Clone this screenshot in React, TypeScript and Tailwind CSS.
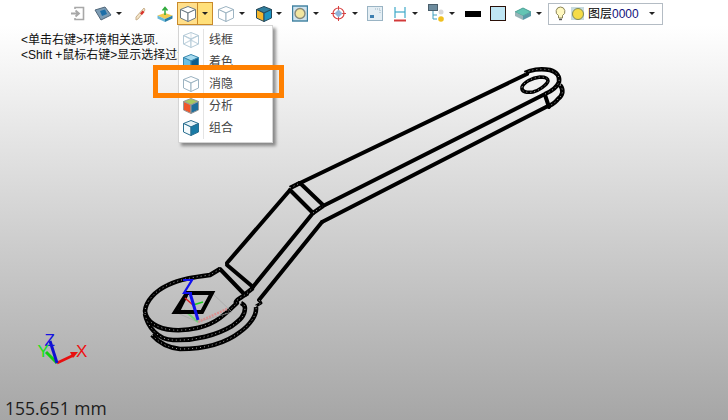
import React from 'react';

const Caret: React.FC<{ className?: string }> = ({ className = '' }) => (
    <span className={`h-0 w-0 shrink-0 border-x-[3px] border-t-[3px] border-x-transparent border-t-[#222] ${className}`} />
);

const Cube: React.FC<{ top?: string; left?: string; right?: string; stroke?: string; wire?: boolean }> = ({
    top = '#ffffff',
    left = '#ffffff',
    right = '#ffffff',
    stroke = '#7f98a8',
    wire = false
}) => (
    <svg width="18" height="18" viewBox="0 0 18 18" className="shrink-0">
        <path d="M9 1.5 16.5 4.5 9 8 1.5 4.5Z" fill={top} stroke={stroke} />
        <path d="M1.5 4.5 9 8V16.5L1.5 13Z" fill={left} stroke={stroke} />
        <path d="M16.5 4.5 9 8V16.5L16.5 13Z" fill={right} stroke={stroke} />
        {wire && <path d="M1.5 13 9 9.5 16.5 13M9 1.5V9.5M1.5 4.5 16.5 13M16.5 4.5 1.5 13" fill="none" stroke={stroke} strokeWidth="0.6" />}
    </svg>
);

const menuItems = [
    { label: '线框', icon: <Cube wire stroke="#b5cbd8" /> },
    { label: '着色', icon: <Cube top="#a8dcf0" left="#6cc0e4" right="#0d5d8c" stroke="#3a8ab0" /> },
    { label: '消隐', icon: <Cube stroke="#9db4c2" /> },
    { label: '分析', icon: <Cube top="#a8c860" left="#f0562a" right="#1f6f9c" stroke="#999" /> },
    { label: '组合', icon: <Cube top="#e8f4f8" left="#f4fafc" right="#1a7ba6" stroke="#2a6f90" /> }
];

// speckled edge that the tessellated parts of the model show
const Rough: React.FC<{ d: string; w?: number }> = ({ d, w = 4.5 }) => (
    <>
        <path d={d} fill="none" stroke="#000" strokeWidth={w} strokeLinejoin="round" />
        <path d={d} fill="none" stroke="#a0a0a0" strokeWidth={1} strokeDasharray="1 3" />
    </>
);

const Wrench = () => (
    <svg className="absolute left-0 top-0" width="728" height="420" viewBox="0 0 728 420">
        <g fill="none" stroke="#000" strokeWidth="4" strokeLinecap="round" strokeLinejoin="round">
            <path d="M298 184 527 74" />
            <path d="M323 206 545 94" />
            <path d="M322 222 548 106" />
            <path d="M300 183 323 205" />
            <path d="M290 190 313 213" />
            <path d="M290 190 227 263" />
            <path d="M313 213 252 288" />
            <path d="M322 222 259 300" />
            <path d="M227 265 253 287" />
            <path d="M220 269 245 295" />
            <path d="M545 95 549 107" />
        </g>
        <Rough d="M525 73C530 70 540 68 550 70C557 72 560 77 559 82C557 87 552 91 545 94" />
        <Rough d="M560 85C564 90 563 95 558 99C556 102 553 104 549 106" />
        <Rough d="M522 87C524 82 532 78 540 77C545 77 548 78 548 81C547 85 538 91 533 92C527 93 521 92 522 87Z" w={3.5} />
        <Rough d="M290 188 300 183" />
        <Rough d="M313 213 323 206" />
        <Rough d="M244 295 253 288" />
        <Rough d="M220 269 210 275C195 277 180 279 168 285C155 291 146 301 145 311C146 322 158 329 173 330C190 331 208 327 220 318C228 312 233 307 237 303C233 302 240 298 248 293" />
        <Rough d="M145 314C147 326 158 340 173 340C195 341 217 335 232 326C240 320 245 316 245 308C245 305 243 304 241 303" />
        <Rough d="M152 335C160 344 170 348 180 349C205 349 226 343 240 332C250 325 257 315 256 307" />
        <Rough d="M256 306 261 303 259 300" w={3} />
        {/* section plane and triad on the head */}
        <path d="M212 293 232 312 198 322 175 312" fill="none" stroke="#a4a4a4" strokeWidth="0.7" />
        <path d="M198 322 227 309" stroke="#d99090" strokeWidth="2.5" strokeDasharray="2 1" fill="none" />
        <path d="M198 322 184 310" stroke="#78d078" strokeWidth="2" fill="none" />
        <path d="M187 293H212L202 312H175Z" fill="none" stroke="#000" strokeWidth="4" />
        <path d="M187 295 179 311" fill="none" stroke="#000" strokeWidth="2.5" />
        <path d="M185 298 193 305" stroke="#e02020" strokeWidth="1.5" fill="none" />
        <path d="M193 305 203 302" stroke="#18d018" strokeWidth="1.5" fill="none" />
        <path d="M183 280H192L184 293H192" stroke="#1010ee" strokeWidth="2.2" fill="none" />
        <path d="M190 293 198 320" stroke="#1010ee" strokeWidth="3" fill="none" />
        {/* axis triad bottom left */}
        <path d="M57 363 74 355" stroke="#e81010" strokeWidth="2.5" fill="none" />
        <path d="M70 352 78 352 73 358Z" fill="#e81010" />
        <path d="M57 363 46 352" stroke="#10d010" strokeWidth="3" fill="none" />
        <path d="M57 363 50 341" stroke="#1010d0" strokeWidth="3" fill="none" />
        <text x="44.5" y="346" fill="#1414e0" fontSize="17" fontFamily="'Liberation Sans', sans-serif">Z</text>
        <text x="37.5" y="357" fill="#18e018" fontSize="17" fontFamily="'Liberation Sans', sans-serif">Y</text>
        <text x="76" y="357" fill="#ee1010" fontSize="17" fontFamily="'Liberation Sans', sans-serif">X</text>
    </svg>
);

const App: React.FC = () => {
    return (
        <div
            className="relative h-[420px] w-[728px] overflow-hidden bg-gradient-to-b from-white from-[6%] to-[#a6a6a6]"
            style={{ fontFamily: "'Liberation Sans', 'Noto Sans CJK SC', sans-serif" }}
        >
            <Wrench />

            {/* toolbar */}
            <div className="relative flex h-[27px] items-center pl-[70px]">
                <svg width="15" height="15" viewBox="0 0 15 15" className="mr-[9px] shrink-0">
                    <path d="M5 3V1.5H13.5V13.5H5V12" fill="none" stroke="#a8a8a8" strokeWidth="1.6" />
                    <path d="M1 7.5H9M5.5 4.5 9 7.5 5.5 10.5" fill="none" stroke="#a8a8a8" strokeWidth="1.8" />
                </svg>
                <svg width="18" height="15" viewBox="0 0 18 15" className="mr-[2px] shrink-0">
                    <path d="M1 4 11 1 17 9 7 14Z" fill="#7c9cb4" stroke="#51677a" />
                    <path d="M6 5 11 3.5 13 8 8 10Z" fill="#1d6fa8" />
                </svg>
                <Caret className="ml-[2px] mr-[13px]" />
                <svg width="11" height="14" viewBox="0 0 11 14" className="mr-[11px] shrink-0">
                    <path d="M9 1 10 3 3 12 1 13 1 10Z" fill="#f3e4c8" stroke="#c9b08c" />
                    <path d="M7.5 3.5 9.5 5 7 8 5 6.5Z" fill="#d8342c" />
                </svg>
                <svg width="16" height="16" viewBox="0 0 16 16" className="mr-[4px] shrink-0">
                    <path d="M8 7 15.5 9.5 8 13 .5 9.5Z" fill="#f2cb4e" />
                    <path d="M.5 9.5 8 13V16L.5 12.5Z" fill="#6ab8d8" />
                    <path d="M15.5 9.5 8 13V16L15.5 12.5Z" fill="#2a7fa8" />
                    <path d="M8 9V2M5.5 4.5 8 1.5 10.5 4.5" fill="none" stroke="#2faa3c" strokeWidth="1.5" />
                </svg>

                {/* active split button */}
                <div className="flex h-[23px] w-[36px] shrink-0 border border-[#c98a2a] bg-[#ffe07a]">
                    <div className="flex w-[20px] items-center justify-center border-r border-[#c98a2a] bg-[#ffdf8a]">
                        <Cube stroke="#6d7c86" />
                    </div>
                    <div className="flex flex-1 items-center justify-center">
                        <Caret />
                    </div>
                </div>

                <div className="mx-[4px]">
                    <Cube stroke="#9db4c2" />
                </div>
                <Caret className="mr-[10px]" />
                <Cube top="#2f7f9f" left="#f4b62c" right="#1b93c2" stroke="#24495c" />
                <Caret className="ml-[3px] mr-[10px]" />
                <svg width="16" height="18" viewBox="0 0 16 18" className="mr-[5px] shrink-0">
                    <rect x="0.5" y="1" width="15" height="15" fill="#cfe4ef" stroke="#3d7f9f" strokeWidth="1.4" />
                    <circle cx="8" cy="8.5" r="5" fill="#f2e6a0" stroke="#8a8a7a" strokeWidth="1.4" />
                </svg>
                <Caret className="mr-[12px]" />
                <svg width="15" height="15" viewBox="0 0 15 15" className="mr-[3px] shrink-0">
                    <circle cx="7.5" cy="7.5" r="5.5" fill="none" stroke="#d84040" strokeWidth="1.2" />
                    <path d="M7.5 0V15M0 7.5H15" stroke="#d84040" strokeWidth="1" />
                    <path d="M7.5 3.5 11.5 7.5 7.5 11.5 3.5 7.5Z" fill="#8fb4d8" />
                </svg>
                <Caret className="ml-[3px] mr-[9px]" />
                <svg width="16" height="15" viewBox="0 0 16 15" className="mr-[11px] shrink-0">
                    <rect x="0.5" y="0.5" width="15" height="14" fill="#e4eef4" stroke="#9ab4c4" />
                    <rect x="3" y="9" width="4" height="3" fill="#3d7fb0" />
                    <path d="M8 3H13V8" fill="none" stroke="#9ab4c4" strokeDasharray="1 1" />
                </svg>
                <svg width="12" height="16" viewBox="0 0 12 16" className="mr-[6px] shrink-0">
                    <path d="M1 1V12M11 1V12" stroke="#3fa9c9" strokeWidth="1.2" />
                    <path d="M1 6H11" stroke="#3fa9c9" strokeWidth="1.2" />
                    <path d="M0 14.5H12" stroke="#d23a3a" strokeWidth="2" />
                </svg>
                <Caret className="mr-[10px]" />
                <svg width="17" height="20" viewBox="0 0 17 20" className="mr-[4px] shrink-0">
                    <rect x="0.5" y="0.5" width="9" height="6" fill="#6d8c9e" stroke="#4a5f6c" />
                    <path d="M5 7V15H9M5 11H9" fill="none" stroke="#3f9fbe" />
                    <circle cx="13" cy="8" r="2.5" fill="#d8d8d8" />
                    <circle cx="13" cy="15" r="2.8" fill="#f0c020" />
                </svg>
                <Caret className="mr-[10px]" />
                <span className="mr-[9px] h-[6px] w-[16px] shrink-0 bg-black" />
                <span className="mr-[8px] h-[15px] w-[16px] shrink-0 border border-[#2a1008] bg-[#bfe6f4]" />
                <svg width="18" height="14" viewBox="0 0 18 14" className="mr-[2px] shrink-0">
                    <path d="M9 1 17 5 9 9 1 5Z" fill="#63c4b4" stroke="#4aa094" />
                    <path d="M1 5 9 9V13L1 9Z" fill="#9ab4b8" />
                    <path d="M17 5 9 9V13L17 9Z" fill="#5a9aa8" />
                </svg>
                <Caret className="ml-[2px] mr-[6px]" />

                {/* layer combo */}
                <div className="flex h-[22px] w-[115px] shrink-0 items-center border border-[#b4bcc4] bg-white pl-[6px] text-[12px] leading-none text-black">
                    <svg width="11" height="15" viewBox="0 0 11 15" className="mr-[5px] shrink-0">
                        <path d="M5.5 1A4.5 4.5 0 0 0 3.5 9.5V12H7.5V9.5A4.5 4.5 0 0 0 5.5 1Z" fill="#fff8c0" stroke="#8a8458" />
                        <path d="M4 13.5H7" stroke="#555" strokeWidth="1.4" />
                    </svg>
                    <span className="mr-[4px] flex h-[13px] w-[13px] items-center justify-center bg-[#c8dce0]">
                        <span className="h-[12px] w-[12px] rounded-full border border-[#7f8a5a] bg-[#f5dc48]" />
                    </span>
                    <span>图层</span>
                    <span className="text-[#10107a]">0000</span>
                    <Caret className="ml-auto mr-[7px]" />
                </div>
            </div>

            {/* hint text */}
            <div className="relative pl-[21px] pt-[6px] text-[12px] leading-[15px] text-[#111]">
                <p>&lt;单击右键&gt;环境相关选项.</p>
                <p>&lt;Shift +鼠标右键&gt;显示选择过滤器</p>
            </div>

            {/* dropdown menu */}
            <div className="absolute left-[178px] top-[25px] w-[95px] border border-[#d4d4d4] bg-white py-[3px] shadow-[3px_3px_3px_rgba(0,0,0,0.4)]">
                {menuItems.map((item) => (
                    <div key={item.label} className="flex h-[22px] items-center">
                        <div className="flex h-full w-[25px] items-center justify-center border-r border-[#e4e4e4]">
                            {item.icon}
                        </div>
                        <span className="pl-[5px] text-[12px] text-[#444]">{item.label}</span>
                    </div>
                ))}
            </div>

            {/* callout */}
            <div className="absolute left-[153px] top-[65px] h-[33px] w-[131px] border-[5px] border-[#ff8000]" />

            <div
                className="absolute bottom-0 left-[5px] text-[17.5px] leading-[24px] text-[#1c1c1c]"
                style={{ fontFamily: "'Open Sans', sans-serif" }}
            >
                155.651 mm
            </div>
        </div>
    );
};

export default App;
